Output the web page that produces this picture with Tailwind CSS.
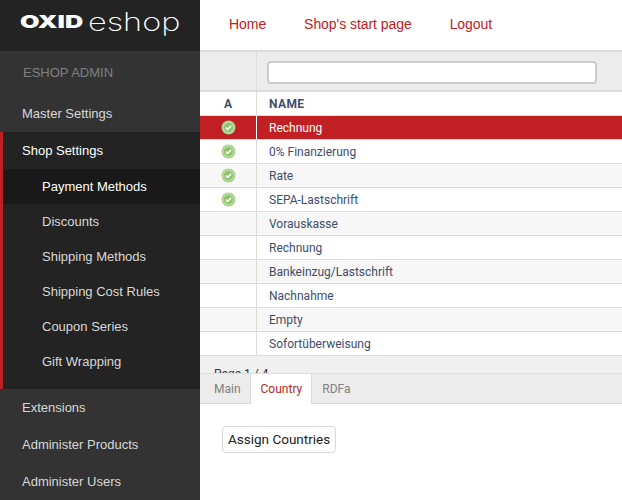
<!DOCTYPE html>
<html lang="en">
<head>
  <meta charset="UTF-8" />
  <title>OXID eShop Admin</title>
  <script src="https://cdn.jsdelivr.net/npm/@tailwindcss/browser@4"></script>
</head>
<body class="bg-white font-['Liberation_Sans',sans-serif] h-[500px] overflow-hidden">
  <div class="flex h-[500px] w-[622px] overflow-hidden">

    <!-- Sidebar -->
    <aside class="w-[200px] shrink-0 bg-[#333333] text-[13px] text-[#d8d8d8]">
      <div class="h-[51px] bg-[#232323] flex items-center pl-[20px] pb-[5px] text-white whitespace-nowrap">
        <span class="inline-block font-['Inter',sans-serif] font-black text-[17px] w-[67px] origin-left scale-x-[1.48]">OXID</span>
        <span class="inline-block font-['Inter',sans-serif] font-extralight text-[25px] ml-[1px] origin-left scale-x-[1.3]">eshop</span>
      </div>
      <div class="h-[44px] pl-[23px] pt-[12px] text-[#808080]">ESHOP ADMIN</div>
      <a class="block h-[37px] pl-[22px] leading-[37px]">Master Settings</a>
      <div class="h-[257px] bg-[#232323] border-l-[3px] border-[#c02024]">
        <a class="block h-[37px] pl-[19px] leading-[37px] text-white">Shop Settings</a>
        <a class="block h-[35px] pl-[39px] leading-[35px] text-white bg-[#191919]">Payment Methods</a>
        <a class="block h-[35px] pl-[39px] leading-[35px]">Discounts</a>
        <a class="block h-[35px] pl-[39px] leading-[35px]">Shipping Methods</a>
        <a class="block h-[35px] pl-[39px] leading-[35px]">Shipping Cost Rules</a>
        <a class="block h-[35px] pl-[39px] leading-[35px]">Coupon Series</a>
        <a class="block h-[35px] pl-[39px] leading-[35px]">Gift Wrapping</a>
      </div>
      <a class="block h-[37px] pl-[22px] leading-[37px]">Extensions</a>
      <a class="block h-[37px] pl-[22px] leading-[37px]">Administer Products</a>
      <a class="block h-[37px] pl-[22px] leading-[37px]">Administer Users</a>
    </aside>

    <!-- Main -->
    <main class="flex-1 min-w-0 flex flex-col">
      <nav class="h-[50px] flex items-center pl-[29px] gap-[38px] text-[14px] tracking-[-0.06px] text-[#c02024] shrink-0 pb-[2px]">
        <a>Home</a>
        <a>Shop's start page</a>
        <a>Logout</a>
      </nav>

      <!-- List -->
      <div class="h-[323px] shrink-0 overflow-hidden bg-[#f0f0f0] font-['Roboto',sans-serif] text-[12px] text-[#3d4d6b] border-t-2 border-[#dcdcdc]">
        <div class="flex h-[40px] bg-[#ececec] border-b-2 border-[#dcdcdc]">
          <div class="w-[57px] border-r border-[#dcdcdc]"></div>
          <div class="flex-1 pl-[10px] pt-[9px]">
            <div class="w-[330px] h-[23px] bg-white border-2 border-[#cccccc] rounded-[4px]"></div>
          </div>
        </div>
        <div class="flex h-[24px] bg-white border-b border-[#dcdcdc] font-bold">
          <div class="w-[57px] border-r border-[#dcdcdc] text-center leading-[25px]">A</div>
          <div class="flex-1 pl-[12px] leading-[25px] tracking-[0.4px]">NAME</div>
        </div>

        <div class="flex h-[24px] bg-[#c02024] text-white border-b border-[#dcdcdc]">
          <div class="w-[57px] border-r border-white flex items-center justify-center">
            <svg class="w-[15px] h-[15px]" viewBox="0 0 14 14"><circle cx="7" cy="7" r="6.5" fill="#a9d38c"/><circle cx="7" cy="7" r="4.6" fill="#8cc36b" stroke="#d5e9c5" stroke-width="0.6"/><path d="M4.6 7.1l1.7 1.6 3.1-3.2" fill="none" stroke="#fff" stroke-width="1.5"/></svg>
          </div>
          <div class="flex-1 pl-[12px] leading-[25px]">Rechnung</div>
        </div>
        <div class="flex h-[24px] bg-white border-b border-[#dcdcdc]">
          <div class="w-[57px] border-r border-[#dcdcdc] flex items-center justify-center">
            <svg class="w-[15px] h-[15px]" viewBox="0 0 14 14"><circle cx="7" cy="7" r="6.5" fill="#a9d38c"/><circle cx="7" cy="7" r="4.6" fill="#8cc36b" stroke="#d5e9c5" stroke-width="0.6"/><path d="M4.6 7.1l1.7 1.6 3.1-3.2" fill="none" stroke="#fff" stroke-width="1.5"/></svg>
          </div>
          <div class="flex-1 pl-[12px] leading-[25px]">0% Finanzierung</div>
        </div>
        <div class="flex h-[24px] bg-[#f7f7f7] border-b border-[#dcdcdc]">
          <div class="w-[57px] border-r border-[#dcdcdc] flex items-center justify-center">
            <svg class="w-[15px] h-[15px]" viewBox="0 0 14 14"><circle cx="7" cy="7" r="6.5" fill="#a9d38c"/><circle cx="7" cy="7" r="4.6" fill="#8cc36b" stroke="#d5e9c5" stroke-width="0.6"/><path d="M4.6 7.1l1.7 1.6 3.1-3.2" fill="none" stroke="#fff" stroke-width="1.5"/></svg>
          </div>
          <div class="flex-1 pl-[12px] leading-[25px]">Rate</div>
        </div>
        <div class="flex h-[24px] bg-white border-b border-[#dcdcdc]">
          <div class="w-[57px] border-r border-[#dcdcdc] flex items-center justify-center">
            <svg class="w-[15px] h-[15px]" viewBox="0 0 14 14"><circle cx="7" cy="7" r="6.5" fill="#a9d38c"/><circle cx="7" cy="7" r="4.6" fill="#8cc36b" stroke="#d5e9c5" stroke-width="0.6"/><path d="M4.6 7.1l1.7 1.6 3.1-3.2" fill="none" stroke="#fff" stroke-width="1.5"/></svg>
          </div>
          <div class="flex-1 pl-[12px] leading-[25px]">SEPA-Lastschrift</div>
        </div>
        <div class="flex h-[24px] bg-[#f7f7f7] border-b border-[#dcdcdc]">
          <div class="w-[57px] border-r border-[#dcdcdc]"></div>
          <div class="flex-1 pl-[12px] leading-[25px]">Vorauskasse</div>
        </div>
        <div class="flex h-[24px] bg-white border-b border-[#dcdcdc]">
          <div class="w-[57px] border-r border-[#dcdcdc]"></div>
          <div class="flex-1 pl-[12px] leading-[25px]">Rechnung</div>
        </div>
        <div class="flex h-[24px] bg-[#f7f7f7] border-b border-[#dcdcdc]">
          <div class="w-[57px] border-r border-[#dcdcdc]"></div>
          <div class="flex-1 pl-[12px] leading-[25px]">Bankeinzug/Lastschrift</div>
        </div>
        <div class="flex h-[24px] bg-white border-b border-[#dcdcdc]">
          <div class="w-[57px] border-r border-[#dcdcdc]"></div>
          <div class="flex-1 pl-[12px] leading-[25px]">Nachnahme</div>
        </div>
        <div class="flex h-[24px] bg-[#f7f7f7] border-b border-[#dcdcdc]">
          <div class="w-[57px] border-r border-[#dcdcdc]"></div>
          <div class="flex-1 pl-[12px] leading-[25px]">Empty</div>
        </div>
        <div class="flex h-[24px] bg-white border-b border-[#dcdcdc]">
          <div class="w-[57px] border-r border-[#dcdcdc]"></div>
          <div class="flex-1 pl-[12px] leading-[25px]">Sofortüberweisung</div>
        </div>
        <div class="pl-[14px] pt-[9px] text-[#333333]">Page 1 / 4</div>
      </div>

      <!-- Tabs -->
      <div class="h-[31px] shrink-0 flex bg-[#ececec] border-y border-[#dcdcdc] font-['Roboto',sans-serif] text-[12px] text-[#808080]">
        <a class="pl-[14px] pr-[9px] leading-[30px]">Main</a>
        <a class="pl-[10px] pr-[9px] leading-[30px] h-[30px] bg-white text-[#b0282c] border-x border-[#dcdcdc]">Country</a>
        <a class="px-[10px] leading-[30px]">RDFa</a>
      </div>

      <div class="flex-1 bg-white pl-[22px] pt-[22px] font-['Roboto',sans-serif]">
        <button class="h-[27px] px-[5px] bg-white border border-[#d8d8d8] rounded-[4px] text-[13.5px] text-[#222222]">Assign Countries</button>
      </div>
    </main>
  </div>
</body>
</html>
